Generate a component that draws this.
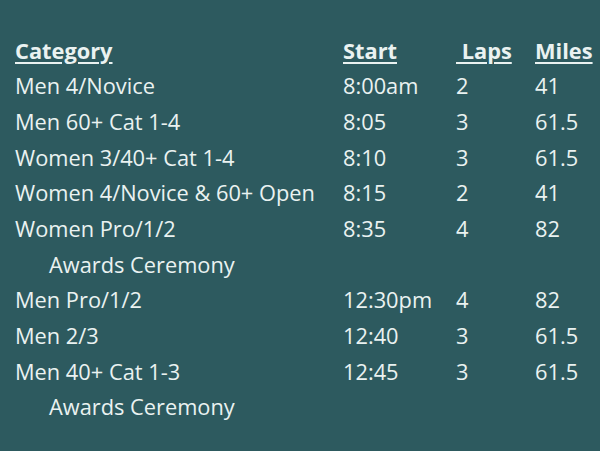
import * as React from "react";

interface Race {
  category: string;
  start?: string;
  laps?: string;
  miles?: string;
  indent?: boolean;
}

const races: Race[] = [
  { category: "Men 4/Novice", start: "8:00am", laps: "2", miles: "41" },
  { category: "Men 60+ Cat 1-4", start: "8:05", laps: "3", miles: "61.5" },
  { category: "Women 3/40+ Cat 1-4", start: "8:10", laps: "3", miles: "61.5" },
  { category: "Women 4/Novice & 60+ Open", start: "8:15", laps: "2", miles: "41" },
  { category: "Women Pro/1/2", start: "8:35", laps: "4", miles: "82" },
  { category: "Awards Ceremony", indent: true },
  { category: "Men Pro/1/2", start: "12:30pm", laps: "4", miles: "82" },
  { category: "Men 2/3", start: "12:40", laps: "3", miles: "61.5" },
  { category: "Men 40+ Cat 1-3", start: "12:45", laps: "3", miles: "61.5" },
  { category: "Awards Ceremony", indent: true },
];

const row = "grid grid-cols-[328px_113px_79px_1fr] h-[35.7px] items-center";

export default function App() {
  return (
    <div
      className="w-[600px] h-[451px] bg-[#2d5a5f] text-[#eaf2f1] pt-[33px] pl-[15px] text-[21.8px] overflow-hidden"
      style={{ fontFamily: '"Open Sans", "Liberation Sans", sans-serif' }}
    >
      <div className={`${row} font-bold underline underline-offset-[3px] decoration-[1.5px]`}>
        <span>Category</span>
        <span>Start</span>
        <span className="whitespace-pre"> Laps</span>
        <span>Miles</span>
      </div>
      {races.map((r, i) => (
        <div key={i} className={row}>
          <span className={r.indent ? "pl-[34px] whitespace-nowrap" : "whitespace-nowrap"}>{r.category}</span>
          <span>{r.start}</span>
          <span>{r.laps}</span>
          <span>{r.miles}</span>
        </div>
      ))}
    </div>
  );
}
